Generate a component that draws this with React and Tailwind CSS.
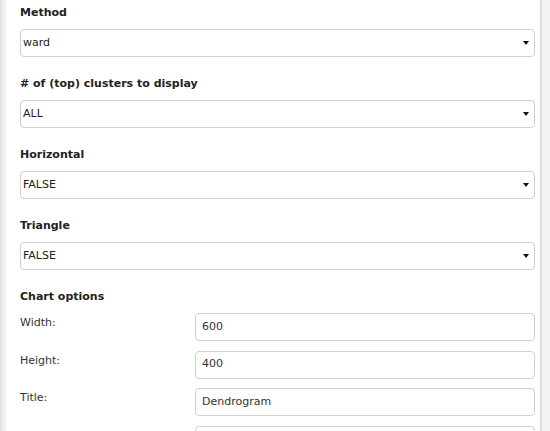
import React from 'react';

const font = { fontFamily: '"DejaVu Sans", Verdana, sans-serif' };

const Caret = () => (
  <svg width="6" height="4" viewBox="0 0 6 4" className="shrink-0">
    <path d="M0 0 H6 L3 4 Z" fill="#111" />
  </svg>
);

const SelectBox = ({ value }) => (
  <div className="h-[28px] w-full flex items-center justify-between rounded-[4px] border border-[#cfcfcf] bg-white pl-[2px] pr-[5px] text-[11px] text-[#222]">
    <span>{value}</span>
    <Caret />
  </div>
);

const TextBox = ({ value }) => (
  <div className="h-[28px] w-[340px] flex items-center rounded-[4px] border border-[#cfcfcf] bg-white px-[6px] text-[11px] text-[#333]">
    {value}
  </div>
);

const selects = [
  { label: 'Method', value: 'ward' },
  { label: '# of (top) clusters to display', value: 'ALL' },
  { label: 'Horizontal', value: 'FALSE' },
  { label: 'Triangle', value: 'FALSE' },
];

const options = [
  { label: 'Width:', value: '600' },
  { label: 'Height:', value: '400' },
  { label: 'Title:', value: 'Dendrogram' },
  { label: 'Label size:', value: '' },
];

export default function App() {
  return (
    <div className="flex h-[431px] w-[550px] overflow-hidden bg-white" style={font}>
      <div className="w-[8px] shrink-0 bg-gradient-to-r from-[#e2e2e2] to-white" />
      <div className="w-[532px] shrink-0 bg-white pl-[12px] pr-[6px] pt-[5px]">
        <div className="w-[514.5px]">
          {selects.map((s) => (
            <div key={s.label} className="mb-[19px]">
              <div className="h-[16px] leading-[16px] text-[11px] font-bold text-[#222] mb-[8px]">
                {s.label}
              </div>
              <SelectBox value={s.value} />
            </div>
          ))}
          <div className="h-[16px] leading-[16px] text-[11px] font-bold text-[#222] mb-[8px]">
            Chart options
          </div>
          <div className="flex flex-col gap-[9.5px]">
            {options.map((o) => (
              <div key={o.label} className="flex items-start">
                <div className="w-[175px] shrink-0 pt-[2px] leading-[16px] text-[11px] text-[#333]">
                  {o.label}
                </div>
                <TextBox value={o.value} />
              </div>
            ))}
          </div>
        </div>
      </div>
      <div className="w-[2px] shrink-0 bg-[#dedede]" />
      <div className="flex-1 bg-[#f3f3f3]" />
    </div>
  );
}
